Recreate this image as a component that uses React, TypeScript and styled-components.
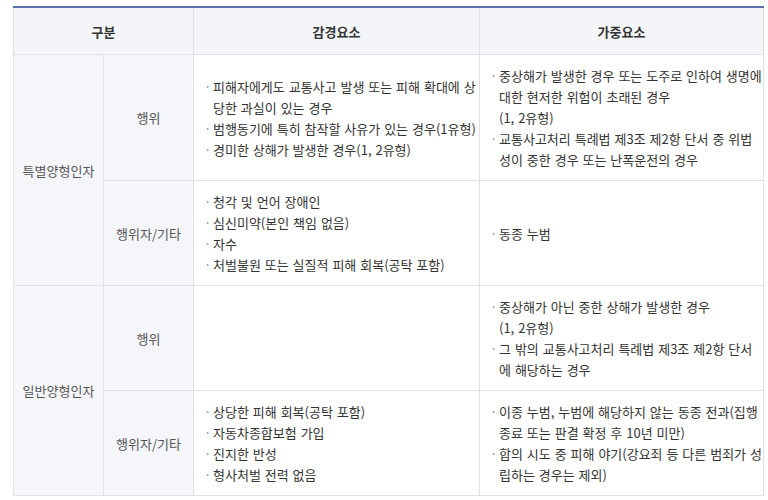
import { FC } from "react";
import styled, { createGlobalStyle } from "styled-components";

const GlobalStyle = createGlobalStyle`
  body {
    margin: 0;
    background: #fff;
    font-family: "Noto Sans CJK KR", "Noto Sans", sans-serif;
  }
`;

const Page = styled.div`
  padding: 6px 5px 0 13px;
`;

const Table = styled.table`
  width: 750px;
  border-collapse: collapse;
  table-layout: fixed;
  border-top: 2px solid #5f6fae;
  font-size: 13px;
  color: #333;
`;

const HeadCell = styled.th`
  height: 46px;
  padding: 0;
  background: #f4f5f9;
  border: 1px solid #e1e2e6;
  border-top: none;
  font-size: 13px;
  font-weight: 700;
  color: #333;
  text-align: center;
`;

const LabelCell = styled.td`
  padding: 0;
  background: #f5f6fa;
  border: 1px solid #e1e2e6;
  text-align: center;
  vertical-align: middle;
  color: #555;
  line-height: 21px;
`;

const ItemCell = styled.td<{ $height: number }>`
  height: ${({ $height }) => $height}px;
  box-sizing: border-box;
  padding: 10px 0 10px 10px;
  border: 1px solid #e1e2e6;
  vertical-align: middle;
  background: #fff;
  word-spacing: 1px;
`;

const List = styled.ul`
  margin: 0;
  padding: 0;
  list-style: none;
`;

const Item = styled.li`
  position: relative;
  padding-left: 9px;
  line-height: 21px;

  &::before {
    content: "·";
    position: absolute;
    left: 0;
    top: 0;
    color: #888;
  }
`;

interface RowData {
  group?: string;
  kind: string;
  height: number;
  mitigating: string[];
  aggravating: string[];
}

const rows: RowData[] = [
  {
    group: "특별양형인자",
    kind: "행위",
    height: 126,
    mitigating: [
      "피해자에게도 교통사고 발생 또는 피해 확대에 상당한 과실이 있는 경우",
      "범행동기에 특히 참작할 사유가 있는 경우(1유형)",
      "경미한 상해가 발생한 경우(1, 2유형)",
    ],
    aggravating: [
      "중상해가 발생한 경우 또는 도주로 인하여 생명에 대한 현저한 위험이 초래된 경우\n(1, 2유형)",
      "교통사고처리 특례법 제3조 제2항 단서 중 위법성이 중한 경우 또는 난폭운전의 경우",
    ],
  },
  {
    kind: "행위자/기타",
    height: 105,
    mitigating: [
      "청각 및 언어 장애인",
      "심신미약(본인 책임 없음)",
      "자수",
      "처벌불원 또는 실질적 피해 회복(공탁 포함)",
    ],
    aggravating: ["동종 누범"],
  },
  {
    group: "일반양형인자",
    kind: "행위",
    height: 104,
    mitigating: [],
    aggravating: [
      "중상해가 아닌 중한 상해가 발생한 경우\n(1, 2유형)",
      "그 밖의 교통사고처리 특례법 제3조 제2항 단서에 해당하는 경우",
    ],
  },
  {
    kind: "행위자/기타",
    height: 104,
    mitigating: [
      "상당한 피해 회복(공탁 포함)",
      "자동차종합보험 가입",
      "진지한 반성",
      "형사처벌 전력 없음",
    ],
    aggravating: [
      "이종 누범, 누범에 해당하지 않는 동종 전과(집행종료 또는 판결 확정 후 10년 미만)",
      "합의 시도 중 피해 야기(강요죄 등 다른 범죄가 성립하는 경우는 제외)",
    ],
  },
];

const Factors: FC<{ items: string[] }> = ({ items }) => (
  <List>
    {items.map((text) => (
      <Item key={text}>
        {text.split("\n").map((part, i) => (
          <span key={i}>
            {i > 0 && <br />}
            {part}
          </span>
        ))}
      </Item>
    ))}
  </List>
);

const App: FC = () => {
  return (
    <Page>
      <GlobalStyle />
      <Table>
        <colgroup>
          <col style={{ width: 90 }} />
          <col style={{ width: 90 }} />
          <col style={{ width: 286 }} />
          <col style={{ width: 284 }} />
        </colgroup>
        <thead>
          <tr>
            <HeadCell colSpan={2}>구분</HeadCell>
            <HeadCell>감경요소</HeadCell>
            <HeadCell>가중요소</HeadCell>
          </tr>
        </thead>
        <tbody>
          {rows.map((row, idx) => (
            <tr key={idx}>
              {row.group && <LabelCell rowSpan={2}>{row.group}</LabelCell>}
              <LabelCell>{row.kind}</LabelCell>
              <ItemCell $height={row.height}>
                <Factors items={row.mitigating} />
              </ItemCell>
              <ItemCell $height={row.height}>
                <Factors items={row.aggravating} />
              </ItemCell>
            </tr>
          ))}
        </tbody>
      </Table>
    </Page>
  );
};

export default App;
